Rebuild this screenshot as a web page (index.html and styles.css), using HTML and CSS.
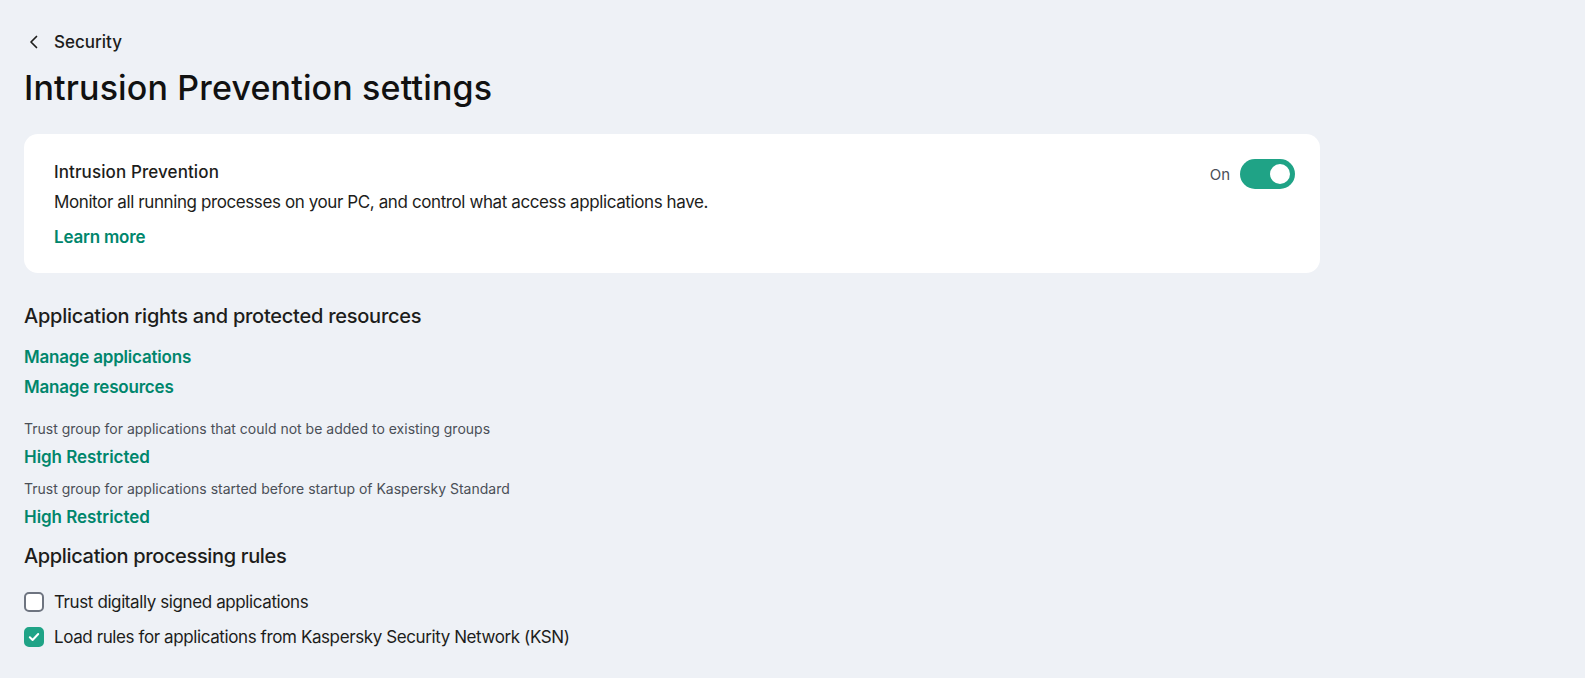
FILE: index.html
```html
<!DOCTYPE html>
<html lang="en">
<head>
<meta charset="utf-8">
<title>Intrusion Prevention settings</title>
<link rel="stylesheet" href="styles.css">
</head>
<body>
<div class="page">
  <div class="breadcrumb">
    <svg class="chev" width="10" height="14" viewBox="0 0 10 14"><polyline points="7.5,1.5 2,7 7.5,12.5" fill="none" stroke="#1d1d1b" stroke-width="1.7" stroke-linecap="round" stroke-linejoin="round"/></svg>
    <span>Security</span>
  </div>
  <h1 class="title">Intrusion Prevention settings</h1>

  <div class="card">
    <div class="card-body">
      <div class="card-title">Intrusion Prevention</div>
      <div class="card-desc">Monitor all running processes on your PC, and control what access applications have.</div>
      <a class="link card-link">Learn more</a>
    </div>
    <div class="switch-wrap">
      <span class="switch-label">On</span>
      <span class="switch"><span class="knob"></span></span>
    </div>
  </div>

  <h2 class="section h-first">Application rights and protected resources</h2>
  <a class="link l1">Manage applications</a>
  <a class="link l2">Manage resources</a>
  <div class="hint h1">Trust group for applications that could not be added to existing groups</div>
  <a class="link l3">High Restricted</a>
  <div class="hint h2">Trust group for applications started before startup of Kaspersky Standard</div>
  <a class="link l3">High Restricted</a>

  <h2 class="section h-second">Application processing rules</h2>
  <label class="check c1"><span class="box"></span><span>Trust digitally signed applications</span></label>
  <label class="check c2"><span class="box on"><svg width="12" height="10" viewBox="0 0 12 10"><polyline points="1.8,5.2 4.6,8 10.2,2" fill="none" stroke="#fff" stroke-width="2" stroke-linecap="round" stroke-linejoin="round"/></svg></span><span>Load rules for applications from Kaspersky Security Network (KSN)</span></label>
</div>
</body>
</html>
```
FILE: styles.css
```css
* { box-sizing: border-box; }
html, body { margin: 0; padding: 0; }
body {
  background: #eef1f6;
  font-family: Inter, "Noto Sans", sans-serif;
  color: #1d1d1b;
  width: 1585px;
  height: 678px;
  overflow: hidden;
}
.page {
  padding: 30px 0 0 24px;
  display: flex;
  flex-direction: column;
  align-items: flex-start;
}
.breadcrumb {
  display: flex;
  align-items: center;
  height: 24px;
  font-size: 17px;
  font-weight: 500;
  line-height: 24px;
  letter-spacing: 0;
}
.chev { margin-left: 5px; margin-right: 15px; }
.title {
  margin: 12px 0 0 0;
  font-size: 34px;
  line-height: 44px;
  font-weight: 500;
  letter-spacing: 0.15px;
  color: #111;
}
.card {
  margin-top: 24px;
  width: 1296px;
  height: 139px;
  background: #fff;
  border-radius: 14px;
  padding: 26px 25px 24px 30px;
  display: flex;
  justify-content: space-between;
  align-self: flex-start;
}
.card-body { display: flex; flex-direction: column; align-items: flex-start; }
.card-title { font-size: 17px; line-height: 24px; font-weight: 500; letter-spacing: 0.1px; }
.card-desc { margin-top: 6px; font-size: 17px; line-height: 24px; letter-spacing: -0.4px; }
.card-link { margin-top: 11px; }
.link {
  color: #00866c;
  font-size: 17px;
  line-height: 24px;
  font-weight: 600;
  letter-spacing: -0.2px;
  cursor: pointer;
}
.switch-wrap {
  display: flex;
  align-items: center;
  gap: 10px;
  margin-top: -1px;
  height: 30px;
}
.switch-label { font-size: 15px; color: #4a4f57; }
.switch {
  width: 55px;
  height: 30px;
  border-radius: 15px;
  background: #1fa386;
  display: flex;
  align-items: center;
  justify-content: flex-end;
  padding-right: 5px;
}
.knob { width: 20px; height: 20px; border-radius: 50%; background: #fff; }
.section {
  margin: 0;
  font-size: 20px;
  line-height: 28px;
  font-weight: 500;
  letter-spacing: -0.25px;
}
.h-first { margin-top: 29px; }
.l1 { margin-top: 15px; }
.l2 { margin-top: 6px; }
.l3 { margin-top: 6px; letter-spacing: -0.05px; }
.hint { font-size: 14px; line-height: 20px; color: #4a4f57; letter-spacing: 0; }
.h1 { margin-top: 20px; }
.h2 { margin-top: 10px; }
.h-second { margin-top: 13px; letter-spacing: -0.35px; }
.check {
  display: flex;
  align-items: center;
  gap: 10px;
  font-size: 17px;
  line-height: 24px;
  letter-spacing: -0.4px;
}
.c1 { margin-top: 20px; }
.c2 { margin-top: 11px; }
.box {
  width: 20px;
  height: 20px;
  border-radius: 5px;
  border: 2px solid #6e7480;
  background: #fff;
  display: flex;
  align-items: center;
  justify-content: center;
}
.box.on { background: #1fa386; border-color: #1fa386; }
```
